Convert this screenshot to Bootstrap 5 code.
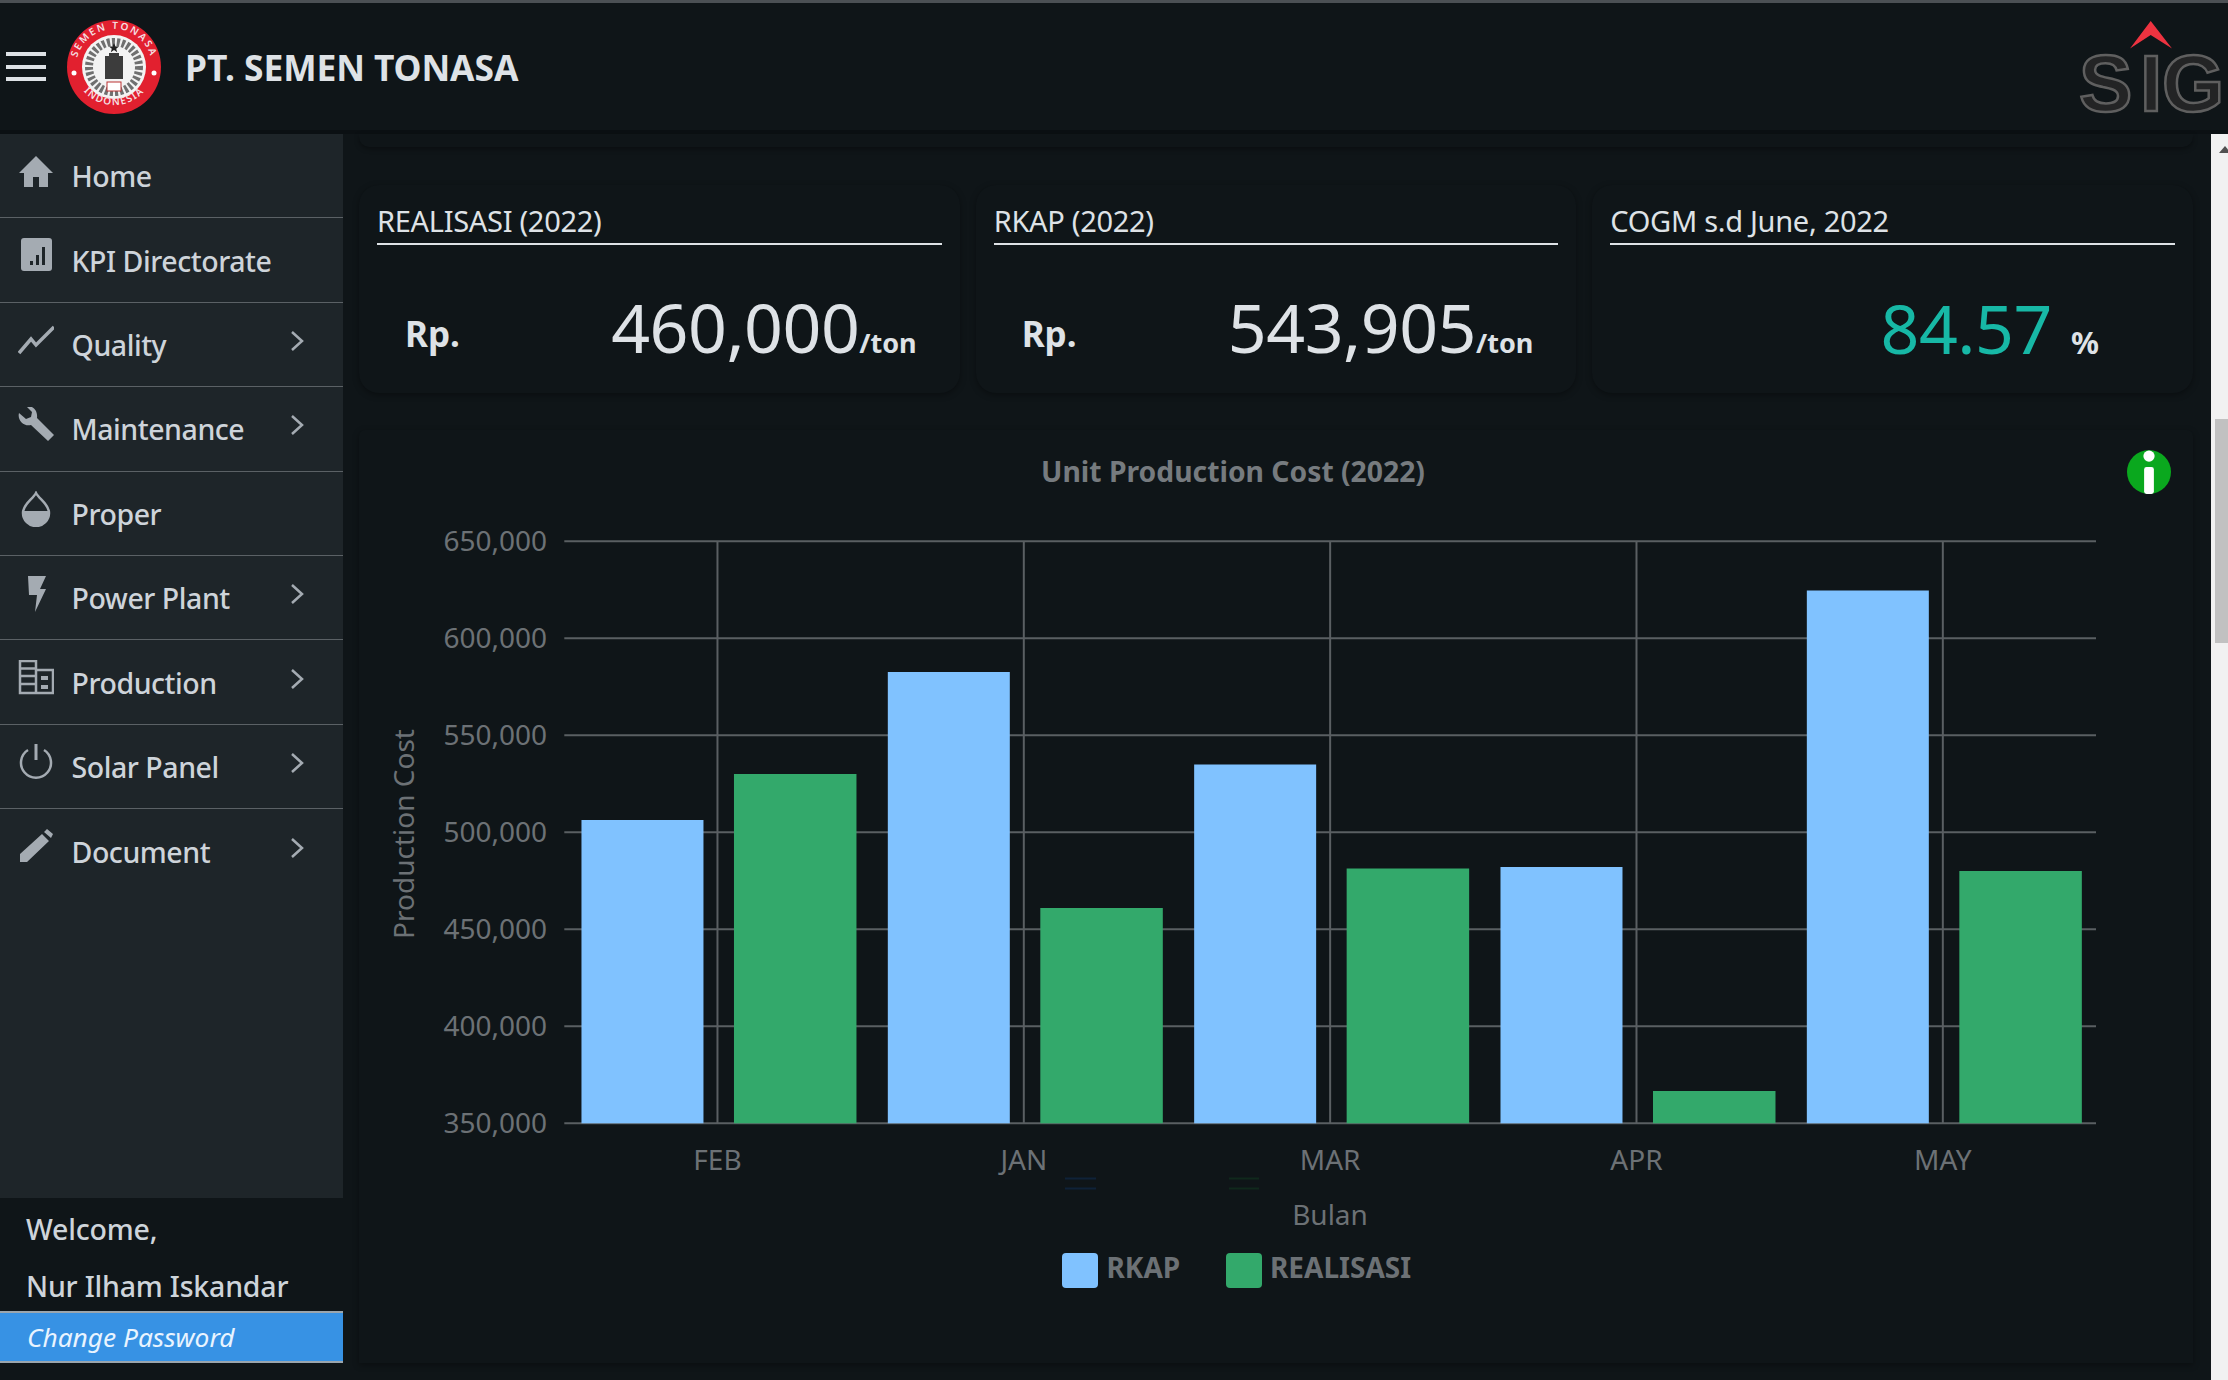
<!DOCTYPE html>
<html lang="id">

<head>
    <meta charset="UTF-8">
    <meta name="viewport" content="width=device-width, initial-scale=1">
    <title>PT. Semen Tonasa - Unit Production Cost</title>
    <link href="https://cdn.jsdelivr.net/npm/bootstrap@5.3.3/dist/css/bootstrap.min.css" rel="stylesheet">
    <style>
        html, body { height: 100%; }

        body {
            background-color: #0f1518;
            color: #dee2e6;
            font-family: "Noto Sans", "Open Sans", sans-serif;
            overflow: hidden;
        }

        .app-shell { height: 100vh; }

        .top-bar {
            height: 134px;
            flex: none;
            border-top: 3px solid #4b5054;
            border-bottom: 4px solid #0b1013;
            background-color: #0f1518;
        }

        .burger { width: 40px; margin-left: 6px; margin-right: 21px; }
        .burger span { display: block; height: 4px; background-color: #dee2e6; margin: 8.5px 0; }
        .brand-name { font-size: 35.4px; font-weight: 700; color: #dee2e6; margin-left: 24px; margin-top: 2px; letter-spacing: -.1px; }

        .side-panel { width: 343px; flex: none; background-color: #0f1518; }
        .side-list { height: 1064px; background-color: #1e2529; border-radius: 0; }

        .side-item {
            height: 84.4px;
            padding: 2px 39px 0 18px;
            background-color: transparent;
            border: 0;
            border-bottom: 2px solid #5b6165;
            color: #ced4da;
            font-size: 28.5px;
            font-weight: 500;
            letter-spacing: -.45px;
        }

        .side-ico { width: 36px; height: 36px; margin-right: 17.5px; margin-top: -10px; flex: none; color: #a4abb2; }
        .side-caret { margin-top: -9px; }

        .user-box { height: 113px; padding: 11px 0 0 26px; font-size: 28.5px; font-weight: 500; color: #ced4da; letter-spacing: -.2px; }
        .user-box div { height: 57px; line-height: 40px; }

        .pass-link {
            display: block;
            height: 52px;
            line-height: 48px;
            padding-left: 27px;
            background-color: #3792e4;
            border-top: 2px solid #9aa5ad;
            border-bottom: 2px solid #9aa5ad;
            color: #e9f4ff;
            font-size: 26.3px;
            font-style: italic;
            text-decoration: none;
        }

        .main-area { padding: 0 18px 0 16px; min-width: 0; }

        .stub-card { height: 13px; background-color: #0f1518; box-shadow: 0 2px 5px rgba(0, 0, 0, .35); border-radius: 0 0 10px 10px; margin-bottom: 38px; }

        .stat-card, .chart-card {
            background-color: #0f1518;
            border: 0;
            border-radius: 20px;
            box-shadow: 0 2px 6px rgba(0, 0, 0, .35);
        }

        .stat-card { height: 208px; padding: 0 18px; margin-bottom: 37px; }
        .stat-title { height: 60px; padding-bottom: 5px; border-bottom: 2px solid #dee2e6; font-size: 29px; line-height: 34px; letter-spacing: -.3px; }
        .stat-rp { font-size: 35px; font-weight: 700; margin-left: 28px; margin-top: -1px; }
        .stat-value { font-size: 68px; line-height: 80px; letter-spacing: -.5px; }
        .stat-unit { font-size: 27px; font-weight: 700; letter-spacing: 0; }
        .stat-pct { margin-right: 51px; }
        .stat-pct .stat-unit { font-size: 31px; margin-left: 2px; }
        .text-teal { color: #17b8a6; }
        .stat-row { padding-right: 25px; padding-top: 44px; height: 146px; margin-top: -5px; }

        .chart-card { height: 933px; border-radius: 6px 6px 0 0; }
        .chart-card svg { display: block; width: 100%; height: 100%; }
        .chart-card text { font-family: "Noto Sans", sans-serif; fill: #6c7175; font-size: 28px; }
        .chart-card text.chart-title { font-weight: 700; font-size: 28.3px; fill: #767b7f; }
        .chart-card text.legend-label { font-weight: 700; font-size: 28px; }

        .info-btn {
            top: 20px;
            right: 22px;
            width: 44px;
            height: 44px;
            background-color: #0aa81e;
        }

        .fake-scroll { width: 17px; flex: none; background-color: #f1f1f1; position: relative; }
        .fake-thumb { width: 13px; height: 224px; margin: 285px 0 0 4px; background-color: #c1c1c1; }
        .fake-arrow { position: absolute; top: 12px; left: 8px; width: 0; height: 0; border: 6px solid transparent; border-top: 0; border-bottom: 7px solid #505050; }
    </style>
</head>

<body>
    <div class="app-shell d-flex flex-column">
        <header class="top-bar d-flex align-items-center">
            <div class="burger"><span></span><span></span><span></span></div>
            <svg width="94" height="96" viewBox="0 0 94 96" aria-label="Logo Semen Tonasa">
                <defs>
                    <path id="arcTop" d="M9 48 A38 38 0 0 1 85 48"></path>
                    <path id="arcBottom" d="M7 52 A40.5 40.5 0 0 0 87 52"></path>
                </defs>
                <circle cx="47" cy="48" r="47" fill="#e2202f"></circle>
                <circle cx="47" cy="48" r="32" fill="#f3f3f3"></circle>
                <circle cx="47" cy="48" r="25" fill="none" stroke="#707070" stroke-width="8" stroke-dasharray="3 2"></circle>
                <path d="M38 37H42V34H52V37H56V60H38Z" fill="#3c3c3c"></path>
                <path d="M47 24l1.500 3.500h3.500l-2.800 2.200 1 3.500-3.200-2.100-3.200 2.100 1-3.500-2.800-2.200h3.500z" fill="#222"></path>
                <rect x="40" y="63" width="14" height="9" fill="#fff" stroke="#b33" stroke-width="1"></rect>
                <circle cx="7" cy="54" r="2.500" fill="#fff"></circle>
                <circle cx="87" cy="54" r="2.500" fill="#fff"></circle>
                <text font-size="10" font-weight="600" fill="#f5dfe1" letter-spacing="2"><textPath href="#arcTop" startOffset="50%" text-anchor="middle">SEMEN TONASA</textPath></text>
                <text font-size="10" font-weight="600" fill="#f5dfe1" letter-spacing="1.400"><textPath href="#arcBottom" startOffset="50%" text-anchor="middle">INDONESIA</textPath></text>
            </svg>
            <span class="brand-name">PT. SEMEN TONASA</span>
            <svg class="ms-auto" width="150" height="122" viewBox="0 -6 150 122" aria-label="Logo SIG">
                <path d="M72.700 9 L94 36.500 L72.700 23 L52 36.500 Z" fill="#ee3340"></path>
                <text x="1 62 84" y="99" font-family="Liberation Sans, sans-serif" font-weight="700" font-size="80" fill="#232425" stroke="#5f5f5f" stroke-width="2.500">SIG</text>
            </svg>
        </header>

        <div class="d-flex flex-fill" style="min-height: 0">
            <aside class="side-panel d-flex flex-column">
                <div class="side-list list-group list-group-flush" id="sideMenu"></div>
                <div class="user-box">
                    <div>Welcome,</div>
                    <div>Nur Ilham Iskandar</div>
                </div>
                <a class="pass-link" href="#">Change Password</a>
            </aside>

            <main class="main-area flex-fill">
                <div class="stub-card"></div>
                <div class="row g-3">
                    <div class="col-4">
                        <div class="card stat-card">
                            <div class="stat-title d-flex align-items-end">REALISASI (2022)</div>
                            <div class="stat-row d-flex align-items-center justify-content-between">
                                <span class="stat-rp">Rp.</span>
                                <span class="stat-value">460,000<span class="stat-unit">/ton</span></span>
                            </div>
                        </div>
                    </div>
                    <div class="col-4">
                        <div class="card stat-card">
                            <div class="stat-title d-flex align-items-end">RKAP (2022)</div>
                            <div class="stat-row d-flex align-items-center justify-content-between">
                                <span class="stat-rp">Rp.</span>
                                <span class="stat-value">543,905<span class="stat-unit">/ton</span></span>
                            </div>
                        </div>
                    </div>
                    <div class="col-4">
                        <div class="card stat-card">
                            <div class="stat-title d-flex align-items-end">COGM s.d June, 2022</div>
                            <div class="stat-row d-flex align-items-center justify-content-end">
                                <span class="stat-value stat-pct"><span class="text-teal">84.57</span> <span class="stat-unit">%</span></span>
                            </div>
                        </div>
                    </div>
                </div>

                <div class="card chart-card position-relative">
                    <svg id="chart" viewBox="359 430 1834 933"></svg>
                    <button class="info-btn position-absolute border-0 rounded-circle p-0 d-flex align-items-center justify-content-center" aria-label="Info">
                        <svg width="6" height="18" viewBox="0 0 6 18">
                            <circle cx="3" cy="2.500" r="2.300" fill="#fff"></circle>
                            <rect x="1" y="7" width="4" height="11" rx="1" fill="#fff"></rect>
                        </svg>
                    </button>
                </div>
            </main>

            <div class="fake-scroll">
                <div class="fake-arrow"></div>
                <div class="fake-thumb"></div>
            </div>
        </div>
    </div>

    <script src="https://cdn.jsdelivr.net/npm/bootstrap@5.3.3/dist/js/bootstrap.bundle.min.js"></script>
    <script>
        const icons = {
            home: '<path d="M18 2 35 19H30V33H21V23H15V33H6V19H1Z" fill="currentColor"/>',
            kpi: '<rect x="3" y="0" width="31" height="33" rx="3" fill="currentColor"/><rect x="12" y="23" width="3" height="4" fill="#1e2529"/><rect x="18" y="17" width="3" height="10" fill="#1e2529"/><rect x="24" y="9" width="3" height="18" fill="#1e2529"/>',
            quality: '<path d="M1 31 13 17 18 23 36 5" fill="none" stroke="currentColor" stroke-width="3.500"/>',
            wrench: '<path d="M1 6 8 12 13 10 14 5 8 -1C14 -2 20 3 19 11L36 28 30 34 13 18C6 20 -1 13 1 6Z" fill="currentColor"/>',
            drop: '<path d="M18 2C21 8 31 13 31 22A13 13 0 0 1 5 22C5 13 15 8 18 2Z" fill="none" stroke="currentColor" stroke-width="2.500"/><path d="M5 20H31V22A13 13 0 0 1 5 22Z" fill="currentColor"/>',
            bolt: '<path d="M10 0H28L22 13H28L17 36 19 19H11Z" fill="currentColor"/>',
            production: '<path d="M2 1H18V33H2ZM18 10H35V33H18Z" fill="none" stroke="currentColor" stroke-width="2.500"/><path d="M2 8.500H18M2 16H18M2 24H18" stroke="currentColor" stroke-width="2.500"/><path d="M23 16H30V20H23ZM23 25H30V29H23Z" fill="currentColor"/>',
            power: '<path d="M10 6A15 15 0 1 0 26 6" fill="none" stroke="currentColor" stroke-width="2.500"/><path d="M18 0V16" stroke="currentColor" stroke-width="3"/>',
            pencil: '<path d="M2 33V25L24 5 31 12 9 33ZM26 3 29 0 35 5 33 9Z" fill="currentColor"/>'
        };

        const menu = [
            ["Home", "home", false],
            ["KPI Directorate", "kpi", false],
            ["Quality", "quality", true],
            ["Maintenance", "wrench", true],
            ["Proper", "drop", false],
            ["Power Plant", "bolt", true],
            ["Production", "production", true],
            ["Solar Panel", "power", true],
            ["Document", "pencil", true]
        ];

        const caret = '<svg class="side-caret ms-auto" width="14" height="22" viewBox="0 0 14 22"><path d="M2 2 12 11 2 20" fill="none" stroke="#a4abb2" stroke-width="2.500"/></svg>';

        document.getElementById("sideMenu").innerHTML = menu.map(([label, icon, more]) =>
            `<a href="#" class="list-group-item side-item d-flex align-items-center">
                <svg class="side-ico" viewBox="0 0 36 36">${icons[icon]}</svg>${label}${more ? caret : ""}
            </a>`).join("");

        // chart: coordinates are page pixels, viewBox starts at the card corner
        const bulan = [
            ["FEB", 820, 774],
            ["JAN", 672, 908],
            ["MAR", 764.5, 868.5],
            ["APR", 867, 1091],
            ["MAY", 590.5, 871]
        ];
        const plot = { left: 564.3, right: 2096, top: 541.3, bottom: 1123.3 };
        const stepX = (plot.right - plot.left) / 5;
        const stepY = (plot.bottom - plot.top) / 6;
        const grid = "#5a5f62";
        let svg = `<text class="chart-title" x="1233" y="482" text-anchor="middle">Unit Production Cost (2022)</text>`;

        for (let i = 0; i <= 6; i++) {
            const y = plot.top + stepY * i;
            const val = (650000 - 50000 * i).toLocaleString("en-US");
            svg += `<line x1="${plot.left}" x2="${plot.right}" y1="${y}" y2="${y}" stroke="${grid}" stroke-width="2"/>`;
            svg += `<text x="547" y="${y + 10}" text-anchor="end">${val}</text>`;
        }

        bulan.forEach(([nama, rkap, real], i) => {
            const c = plot.left + stepX * (i + .5);
            svg += `<line x1="${c}" x2="${c}" y1="${plot.top}" y2="${plot.bottom}" stroke="${grid}" stroke-width="2"/>`;
            svg += `<rect x="${c - 136}" y="${rkap}" width="122" height="${plot.bottom - rkap}" fill="#80c2ff"/>`;
            svg += `<rect x="${c + 16.5}" y="${real}" width="122.5" height="${plot.bottom - real}" fill="#33a96b"/>`;
            svg += `<text x="${c}" y="1169.500" text-anchor="middle">${nama}</text>`;
        });

        svg += `<text x="1330" y="1225" text-anchor="middle">Bulan</text>`;
        svg += `<text transform="translate(414 834) rotate(-90)" text-anchor="middle">Production Cost</text>`;

        // faint leftovers under the x axis
        svg += `<path d="M1065 1178.500H1096M1065 1188.500H1096" stroke="#0f2238" stroke-width="2"/>`;
        svg += `<path d="M1229 1178.500H1259M1229 1188.500H1259" stroke="#10291c" stroke-width="2"/>`;

        svg += `<rect x="1062" y="1253" width="36" height="35" rx="4" fill="#80c2ff"/>`;
        svg += `<text class="legend-label" x="1106.500" y="1278">RKAP</text>`;
        svg += `<rect x="1226" y="1253" width="36" height="35" rx="4" fill="#33a96b"/>`;
        svg += `<text class="legend-label" x="1270" y="1278">REALISASI</text>`;

        document.getElementById("chart").innerHTML = svg;
    </script>
</body>

</html>
